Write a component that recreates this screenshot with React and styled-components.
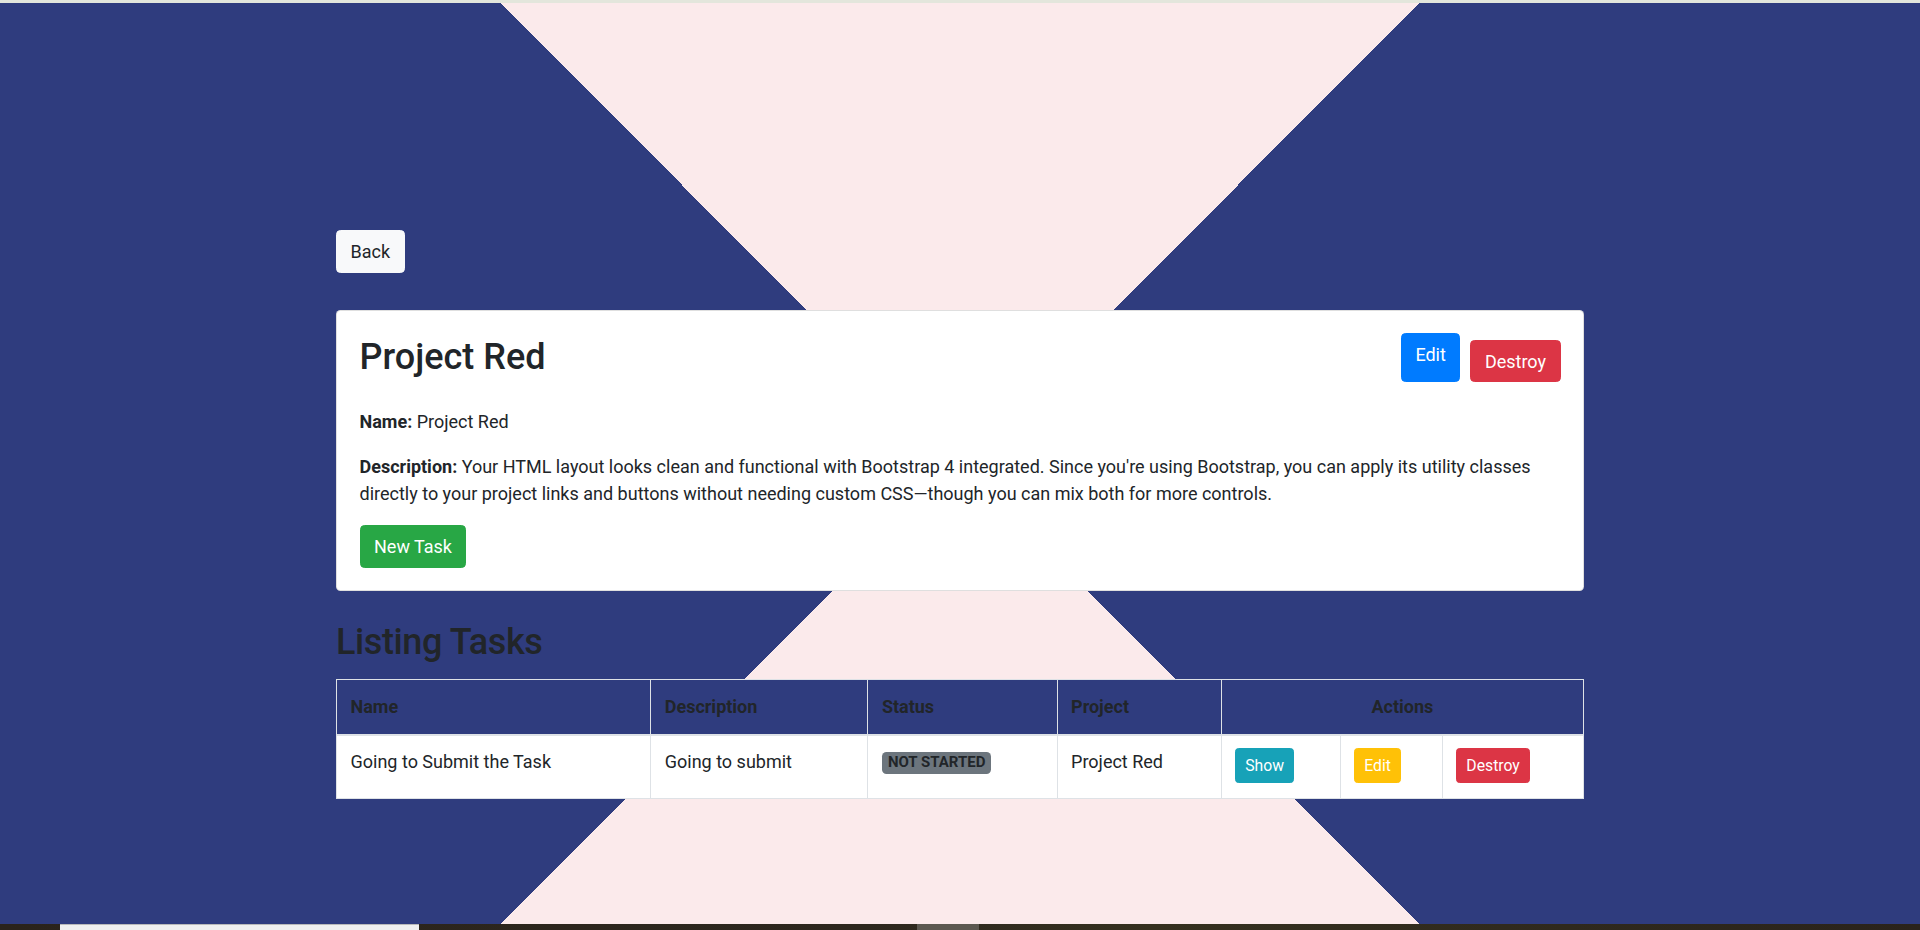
import styled, { createGlobalStyle, css } from "styled-components";

const GlobalStyle = createGlobalStyle`
  html, body {
    margin: 0;
    padding: 0;
    height: 100%;
    overflow: hidden;
  }
  body {
    font-family: "Segoe UI", Roboto, "Noto Sans", sans-serif;
    font-size: 18px;
    line-height: 1.5;
    color: #212529;
  }
  * {
    box-sizing: border-box;
  }
`;

const NAVY = "#2f3c7e";
const PINK = "#fbeaeb";

const Page = styled.div`
  display: flex;
  flex-direction: column;
  height: 100vh;
`;

const TopStrip = styled.div`
  height: 3px;
  flex: none;
  background: #e3e6dc;
`;

// hourglass background: two pink wedges meeting in the middle
const Canvas = styled.main`
  flex: 1;
  background: conic-gradient(
    from 0deg at 50% 50%,
    ${PINK} 0deg 44.94deg,
    ${NAVY} 44.94deg 135.06deg,
    ${PINK} 135.06deg 224.94deg,
    ${NAVY} 224.94deg 315.06deg,
    ${PINK} 315.06deg 360deg
  );
  padding-top: 227px;
`;

const Taskbar = styled.div`
  height: 6px;
  flex: none;
  background: linear-gradient(90deg, #2a231b 0%, #2d271e 45%, #35301f 60%, #2a231b 100%);
  display: flex;
  .tab {
    margin-left: 60px;
    width: 359px;
    background: #efefef;
    border-top: 1px solid #b9b9b9;
  }
  .mid {
    margin-left: 498px;
    width: 62px;
    background: #5c5850;
  }
`;

const Container = styled.div`
  width: 65%;
  margin: 0 auto;
`;

const variants = {
  light: css`
    background: #f8f9fa;
    border-color: #f8f9fa;
    color: #212529;
  `,
  primary: css`
    background: #007bff;
    border-color: #007bff;
    color: #fff;
  `,
  danger: css`
    background: #dc3545;
    border-color: #dc3545;
    color: #fff;
  `,
  success: css`
    background: #28a745;
    border-color: #28a745;
    color: #fff;
  `,
  info: css`
    background: #17a2b8;
    border-color: #17a2b8;
    color: #fff;
  `,
  warning: css`
    background: #ffc107;
    border-color: #ffc107;
    color: #fff;
  `,
};

const Button = styled.button`
  display: inline-block;
  font-family: inherit;
  font-weight: 400;
  font-size: ${(p) => (p.$small ? "15.75px" : "18px")};
  line-height: 1.5;
  padding: ${(p) =>
    p.$small ? "4.5px 9px" : p.$tall ? "6.75px 13.5px 13.5px" : "6.75px 13.5px"};
  border: 1px solid transparent;
  border-radius: ${(p) => (p.$small ? "3.6px" : "4.5px")};
  cursor: pointer;
  white-space: nowrap;
  ${(p) => variants[p.$variant]}
`;

const Card = styled.section`
  margin-top: 37px;
  background: #fff;
  border: 1px solid rgba(0, 0, 0, 0.125);
  border-radius: 4.5px;
  padding: 22.5px;
`;

const CardHeader = styled.div`
  display: flex;
  justify-content: space-between;
  align-items: center;
  margin-bottom: 26px;
`;

const Title = styled.h2`
  margin: 0;
  font-size: 36px;
  font-weight: 500;
  line-height: 1.2;
`;

const HeaderActions = styled.div`
  display: flex;
  align-items: flex-end;
  gap: 10px;
`;

const Para = styled.p`
  margin: 0 0 18px;
  b {
    font-weight: 700;
  }
`;

const SectionTitle = styled.h2`
  margin: 30px 0 14.5px;
  font-size: 36px;
  font-weight: 500;
  line-height: 1.2;
  letter-spacing: -0.4px;
  color: #212529;
`;

const Table = styled.table`
  width: 100%;
  table-layout: fixed;
  border-collapse: collapse;
  border: 1px solid #dee2e6;
`;

const Th = styled.th`
  background: ${NAVY};
  color: #212529;
  font-weight: 700;
  text-align: ${(p) => (p.$center ? "center" : "left")};
  padding: 13.5px;
  border: 1px solid #dee2e6;
  border-bottom-width: 2px;
  vertical-align: bottom;
`;

const Td = styled.td`
  background: #fff;
  padding: 12.5px 13.5px 14.5px;
  border: 1px solid #dee2e6;
  vertical-align: top;
`;

const Badge = styled.span`
  display: inline-block;
  padding: 3.5px 6px;
  font-size: 15px;
  font-weight: 700;
  line-height: 1;
  border-radius: 4.5px;
  background: #6c757d;
  color: #212529;
  vertical-align: 1px;
`;

const columns = [314, 217, 189, 164, 119, 102, 141];

const tasks = [
  {
    name: "Going to Submit the Task",
    description: "Going to submit",
    status: "NOT STARTED",
    project: "Project Red",
  },
];

export default function App() {
  return (
    <Page>
      <GlobalStyle />
      <TopStrip />
      <Canvas>
        <Container>
          <Button $variant="light">Back</Button>
          <Card>
            <CardHeader>
              <Title>Project Red</Title>
              <HeaderActions>
                <Button $variant="primary" $tall>
                  Edit
                </Button>
                <Button $variant="danger">Destroy</Button>
              </HeaderActions>
            </CardHeader>
            <Para>
              <b>Name:</b> Project Red
            </Para>
            <Para>
              <b>Description:</b> Your HTML layout looks clean and functional with
              Bootstrap 4 integrated. Since you're using Bootstrap, you can apply its
              utility classes directly to your project links and buttons without
              needing custom CSS—though you can mix both for more controls.
            </Para>
            <Button $variant="success">New Task</Button>
          </Card>
          <SectionTitle>Listing Tasks</SectionTitle>
          <Table>
            <colgroup>
              {columns.map((w, i) => (
                <col key={i} style={{ width: w }} />
              ))}
            </colgroup>
            <thead>
              <tr>
                <Th>Name</Th>
                <Th>Description</Th>
                <Th>Status</Th>
                <Th>Project</Th>
                <Th colSpan={3} $center>
                  Actions
                </Th>
              </tr>
            </thead>
            <tbody>
              {tasks.map((t) => (
                <tr key={t.name}>
                  <Td>{t.name}</Td>
                  <Td>{t.description}</Td>
                  <Td>
                    <Badge>{t.status}</Badge>
                  </Td>
                  <Td>{t.project}</Td>
                  <Td>
                    <Button $variant="info" $small>
                      Show
                    </Button>
                  </Td>
                  <Td>
                    <Button $variant="warning" $small>
                      Edit
                    </Button>
                  </Td>
                  <Td>
                    <Button $variant="danger" $small>
                      Destroy
                    </Button>
                  </Td>
                </tr>
              ))}
            </tbody>
          </Table>
        </Container>
      </Canvas>
      <Taskbar>
        <div className="tab" />
        <div className="mid" />
      </Taskbar>
    </Page>
  );
}
